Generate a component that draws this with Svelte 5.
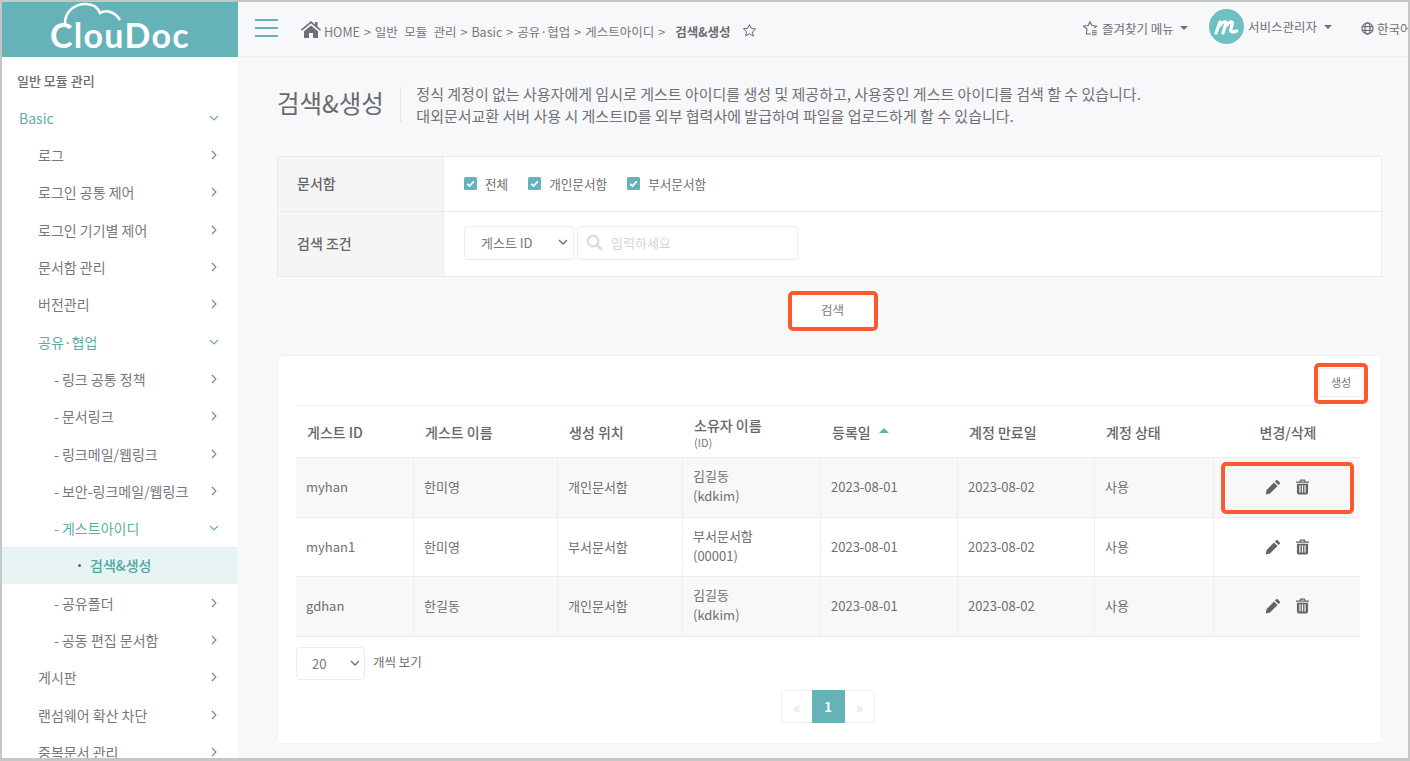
<script lang="ts">
const menu = [
  { label: 'Basic', level: 0, open: true },
  { label: '로그', level: 1 },
  { label: '로그인 공통 제어', level: 1 },
  { label: '로그인 기기별 제어', level: 1 },
  { label: '문서함 관리', level: 1 },
  { label: '버전관리', level: 1 },
  { label: '공유·협업', level: 1, open: true },
  { label: '- 링크 공통 정책', level: 2 },
  { label: '- 문서링크', level: 2 },
  { label: '- 링크메일/웹링크', level: 2 },
  { label: '- 보안-링크메일/웹링크', level: 2 },
  { label: '- 게스트아이디', level: 2, open: true },
  { label: '검색&생성', level: 3 },
  { label: '- 공유폴더', level: 2 },
  { label: '- 공동 편집 문서함', level: 2 },
  { label: '게시판', level: 1 },
  { label: '랜섬웨어 확산 차단', level: 1 },
  { label: '중복문서 관리', level: 1 }
];

const crumbs = ['일반 모듈 관리', 'Basic', '공유·협업', '게스트아이디'];
const boxes = ['전체', '개인문서함', '부서문서함'];

const rows = [
  { id: 'myhan', name: '한미영', place: '개인문서함', owner: '김길동', ownerId: '(kdkim)', reg: '2023-08-01', end: '2023-08-02', state: '사용' },
  { id: 'myhan1', name: '한미영', place: '부서문서함', owner: '부서문서함', ownerId: '(00001)', reg: '2023-08-01', end: '2023-08-02', state: '사용' },
  { id: 'gdhan', name: '한길동', place: '개인문서함', owner: '김길동', ownerId: '(kdkim)', reg: '2023-08-01', end: '2023-08-02', state: '사용' }
];
</script>

{#snippet chevron(open)}
  <svg class="chev" class:down={open} width="10" height="10" viewBox="0 0 10 10">
    {#if open}
      <path d="M1 3l4 4 4-4" />
    {:else}
      <path d="M3 1l4 4-4 4" />
    {/if}
  </svg>
{/snippet}

{#snippet selectArrow()}
  <svg class="sel-arrow" width="10" height="7" viewBox="0 0 10 7"><path d="M1 1l4 4 4-4" /></svg>
{/snippet}

<div class="frame">
  <aside class="side">
    <div class="logo">
      <svg class="cloud" width="70" height="24" viewBox="0 0 70 24">
        <path d="M3 21C3 9 14 1 25 2c7 .5 11 4 13 9 6-4 15-1 20 7" />
      </svg>
      <span>ClouDoc</span>
    </div>
    <nav class="menu">
      <div class="menu-title">일반 모듈 관리</div>
      {#each menu as m}
        <div class="item lv{m.level}" class:open={m.open} class:current={m.level === 3}>
          {#if m.level === 3}<i class="dot"></i>{/if}
          <span class="item-label">{m.label}</span>
          {#if m.level !== 3}{@render chevron(m.open)}{/if}
        </div>
      {/each}
    </nav>
  </aside>

  <div class="right">
    <header class="top">
      <div class="burger"><i></i><i></i><i></i></div>
      <svg class="home" width="20" height="17" viewBox="0 0 20 17">
        <path d="M10 0 0 8.500l1 1.200L10 2.200l9 7.500 1-1.200-3.500-3V1h-2.500v2.600L10 0z" />
        <path d="M3 10.200 10 4.400l7 5.800V17h-5v-5H8v5H3z" />
      </svg>
      <div class="crumbs">
        <span>HOME</span>
        {#each crumbs as c}
          <span class="gt">&gt;</span><span>{c}</span>
        {/each}
        <span class="gt">&gt;</span><b>검색&생성</b>
      </div>
      <svg class="star" width="15" height="15" viewBox="0 0 24 24">
        <path d="M12 2.500l2.900 6.300 6.900.8-5.100 4.700 1.400 6.800L12 17.200l-6.100 3.400 1.400-6.800-5.100-4.700 6.900-.8z" />
      </svg>
      <div class="top-right">
        <div class="fav">
          <svg class="star" width="16" height="16" viewBox="0 0 24 24">
            <path d="M13 21H6.500l1-7.200-5.100-4.700 6.900-.8L12 2.500l2.900 5.800 6.900.8-3 3" />
            <path d="M15 16h7M15 19h7M15 22h7" />
          </svg>
          <span>즐겨찾기 메뉴</span><i class="caret"></i>
        </div>
        <div class="user">
          <div class="avatar">
            <svg width="26" height="16" viewBox="0 0 26 16">
              <path d="M2 14 6 3M6.500 6C8 3 11.500 1.500 12 4l-3 10M13 6c1.500-3 5-4.500 5.500-2l-1.800 7c-.3 2 2 2.500 6 1" />
            </svg>
          </div>
          <span>서비스관리자</span><i class="caret"></i>
        </div>
        <div class="lang">
          <svg width="13" height="13" viewBox="0 0 14 14">
            <circle cx="7" cy="7" r="6" />
            <ellipse cx="7" cy="7" rx="2.800" ry="6" />
            <path d="M1 5h12M1 9h12" />
          </svg>
          <span>한국어</span>
        </div>
      </div>
    </header>

    <main class="content">
      <div class="page-head">
        <h1>검색&생성</h1>
        <p>
          정식 계정이 없는 사용자에게 임시로 게스트 아이디를 생성 및 제공하고, 사용중인 게스트 아이디를 검색 할 수 있습니다.<br />
          대외문서교환 서버 사용 시 게스트ID를 외부 협력사에 발급하여 파일을 업로드하게 할 수 있습니다.
        </p>
      </div>

      <section class="search">
        <div class="s-row first">
          <div class="s-th">문서함</div>
          <div class="s-td checks">
            {#each boxes as b}
              <label class="check">
                <svg width="13" height="13" viewBox="0 0 13 13">
                  <rect width="13" height="13" rx="1.500" />
                  <path d="M3.200 6.800l2.300 2.200 4.300-4.600" />
                </svg>
                {b}
              </label>
            {/each}
          </div>
        </div>
        <div class="s-row second">
          <div class="s-th">검색 조건</div>
          <div class="s-td fields">
            <div class="select guest">게스트 ID {@render selectArrow()}</div>
            <div class="input">
              <svg width="17" height="17" viewBox="0 0 17 17">
                <circle cx="7" cy="7" r="5.300" />
                <path class="handle" d="M11 11l4.500 4.500" />
              </svg>
              입력하세요
            </div>
          </div>
        </div>
      </section>

      <div class="search-action">
        <div class="mark mark-search"><button>검색</button></div>
      </div>

      <section class="card">
        <div class="card-top">
          <div class="mark mark-make"><button class="small">생성</button></div>
        </div>
        <div class="grid head">
          <div>게스트 ID</div>
          <div>게스트 이름</div>
          <div>생성 위치</div>
          <div class="owner-h">소유자 이름<small>(ID)</small></div>
          <div class="sorted">등록일 <i class="sort"></i></div>
          <div>계정 만료일</div>
          <div>계정 상태</div>
          <div class="center">변경/삭제</div>
        </div>
        {#each rows as r, i}
          <div class="grid row" class:odd={i % 2 === 0}>
            <div>{r.id}</div>
            <div>{r.name}</div>
            <div>{r.place}</div>
            <div class="owner">{r.owner}<br />{r.ownerId}</div>
            <div>{r.reg}</div>
            <div>{r.end}</div>
            <div>{r.state}</div>
            <div class="actions">
              <svg width="16" height="16" viewBox="0 0 16 16">
                <path d="M11.200 1.200a1 1 0 0 1 1.400 0l2.200 2.200a1 1 0 0 1 0 1.400L13.500 6.100 9.900 2.500zM9 3.400 12.600 7 5 14.600l-4.300 1 .9-4.500z" />
              </svg>
              <svg width="13" height="16" viewBox="0 0 14 16">
                <path fill-rule="evenodd" d="M4.500 0h5l1 2H14v1.500H0V2h3.500zM5.200 1.200 4.900 2h4.200l-.3-.8zM1 4.500h12V14a2 2 0 0 1-2 2H3a2 2 0 0 1-2-2zM3.600 6.200v7.600h1.300V6.200zm2.750 0v7.600h1.300V6.200zm2.750 0v7.600h1.300V6.200z" />
              </svg>
              {#if i === 0}<div class="mark-cell"></div>{/if}
            </div>
          </div>
        {/each}
        <div class="per-page">
          <div class="select size">20 {@render selectArrow()}</div>
          <span>개씩 보기</span>
        </div>
        <div class="pager">
          <span class="pg">«</span>
          <span class="pg active">1</span>
          <span class="pg">»</span>
        </div>
      </section>
    </main>
  </div>
</div>

<style>
  :global(body) {
    margin: 0;
    background: #fff;
  }

  .frame {
    box-sizing: border-box;
    width: 1410px;
    height: 761px;
    display: flex;
    overflow: hidden;
    border: solid #c6c6c6;
    border-width: 2px 2px 3px 2px;
    background: #f7f8fa;
    font-family: 'Noto Sans CJK KR', 'Noto Sans', sans-serif;
    font-size: 13px;
    color: #6e6e73;
  }

  /* sidebar */
  .side {
    width: 236px;
    flex: none;
    background: #fff;
  }

  .logo {
    position: relative;
    height: 55px;
    background: #66b2b9;
    overflow: hidden;
    display: flex;
    justify-content: center;
    align-items: flex-start;
    box-sizing: border-box;
    padding-top: 13px;
    color: #fff;
    font-family: Lato, sans-serif;
    font-size: 34px;
    font-weight: 700;
    letter-spacing: 1.300px;
    line-height: 40px;
  }

  .cloud {
    position: absolute;
    left: 60px;
    top: 0;
    fill: none;
    stroke: #fff;
    stroke-width: 2.500;
  }

  .menu {
    padding-top: 5px;
  }

  .menu-title {
    height: 37.250px;
    line-height: 37.250px;
    padding-left: 15px;
    font-weight: 500;
    color: #6b6b70;
  }

  .item {
    position: relative;
    height: 37.300px;
    display: flex;
    align-items: center;
    justify-content: space-between;
    padding-right: 19px;
    font-size: 14px;
    color: #77777c;
  }

  .item.lv0 {
    padding-left: 17px;
    color: #5dada7;
  }

  .item.lv1 {
    padding-left: 36px;
  }

  .item.lv2 {
    padding-left: 52px;
  }

  .item.open {
    color: #5dada7;
  }

  .item.current {
    justify-content: flex-start;
    padding-left: 76px;
    background: #e8f3f4;
    color: #4fa6a2;
    font-weight: 500;
  }

  .dot {
    width: 3px;
    height: 3px;
    border-radius: 50%;
    background: #666;
    margin-right: 9px;
  }

  .chev {
    fill: none;
    stroke: #808085;
    stroke-width: 1.100;
  }

  .chev.down {
    stroke: #5dada7;
  }

  /* top bar */
  .right {
    flex: 1;
    min-width: 0;
  }

  .top {
    height: 55px;
    display: flex;
    align-items: center;
    box-sizing: border-box;
    border-bottom: 1px solid #f0f1f3;
    padding-left: 17px;
    white-space: nowrap;
    position: relative;
  }

  .burger {
    width: 23px;
    display: flex;
    flex-direction: column;
    gap: 6px;
    margin-right: 23px;
    margin-bottom: 2px;
  }

  .burger i {
    height: 2px;
    background: #66b2b9;
  }

  .home {
    fill: #6e6e76;
    margin-right: 3px;
    margin-top: 1px;
  }

  .crumbs {
    display: flex;
    gap: 4px;
    margin-top: 4px;
    color: #77777c;
    font-size: 12.500px;
    word-spacing: 3.500px;
  }

  .crumbs b {
    font-weight: 700;
    color: #6b6b70;
    margin-left: 6px;
  }

  .star {
    fill: none;
    stroke: #66666c;
    stroke-width: 1.600;
    margin-left: 12px;
    margin-top: 2px;
  }

  .top-right {
    position: absolute;
    left: 844px;
    top: 7px;
    display: flex;
    align-items: center;
    width: 330px;
    font-size: 12.500px;
  }

  .top-right .star {
    margin: 0 4px 0 0;
  }

  .fav {
    display: flex;
    align-items: center;
    width: 127px;
    flex: none;
    margin-top: 3px;
  }

  .user {
    display: flex;
    align-items: center;
    width: 152px;
    flex: none;
    gap: 4px;
  }

  .avatar {
    width: 35px;
    height: 35px;
    border-radius: 50%;
    background: #6fc0c4;
    display: flex;
    align-items: center;
    justify-content: center;
  }

  .avatar svg {
    fill: none;
    stroke: #fff;
    stroke-width: 3.200;
    stroke-linecap: round;
    stroke-linejoin: round;
  }

  .caret {
    width: 0;
    height: 0;
    margin-left: 6px;
    border: 4px solid transparent;
    border-top-color: #6e6e73;
    border-bottom: 0;
  }

  .user .caret {
    margin-left: 3px;
  }

  .lang {
    display: flex;
    align-items: center;
    gap: 3px;
    flex: none;
    margin-top: 3px;
  }

  .lang svg {
    fill: none;
    stroke: #6e6e73;
    stroke-width: 1.300;
  }

  /* content */
  .content {
    padding: 24px 26px 0 39px;
  }

  .page-head {
    display: flex;
    align-items: center;
    height: 46px;
    margin-bottom: 29px;
  }

  h1 {
    box-sizing: border-box;
    height: 35px;
    margin: 0;
    padding-right: 16px;
    border-right: 1px solid #e2e3e5;
    font-size: 24.500px;
    font-weight: 400;
    line-height: 31px;
    color: #6a6a6f;
  }

  .page-head p {
    margin: 2px 0 0 15.500px;
    font-size: 15px;
    line-height: 22.500px;
    color: #707075;
  }

  .search {
    width: 1105px;
    background: #fff;
    border: 1px solid #eaebed;
    box-sizing: border-box;
  }

  .s-row {
    display: flex;
  }

  .s-row.first {
    height: 54px;
    border-bottom: 1px solid #eaebed;
  }

  .s-row.second {
    height: 64px;
  }

  .s-row.first > div {
    padding-bottom: 2px;
  }

  .s-row.second > div {
    padding-bottom: 3px;
  }

  .s-th {
    width: 166px;
    flex: none;
    box-sizing: border-box;
    padding-left: 19px;
    display: flex;
    align-items: center;
    background: #f5f5f5;
    border-right: 1px solid #eaebed;
    font-size: 14px;
    font-weight: 500;
    color: #66666b;
  }

  .s-td {
    display: flex;
    align-items: center;
    padding-left: 20px;
  }

  .checks {
    gap: 20px;
  }

  .check {
    display: flex;
    align-items: center;
    gap: 8px;
    font-size: 12.600px;
  }

  .check rect {
    fill: #66b2b9;
  }

  .check path {
    fill: none;
    stroke: #fff;
    stroke-width: 1.800;
  }

  .fields {
    gap: 3px;
  }

  .select {
    box-sizing: border-box;
    display: flex;
    align-items: center;
    justify-content: space-between;
    background: #fff;
    border: 1px solid #ebecee;
    border-radius: 4px;
  }

  .guest {
    width: 110px;
    height: 34px;
    padding: 0 5px 0 16px;
    color: #77777c;
  }

  .sel-arrow {
    fill: none;
    stroke: #6e6e73;
    stroke-width: 1.300;
  }

  .input {
    box-sizing: border-box;
    width: 221px;
    height: 34px;
    display: flex;
    align-items: center;
    gap: 8px;
    padding-left: 8px;
    border: 1px solid #ebecee;
    border-radius: 4px;
    color: #d5d5d8;
  }

  .input svg {
    fill: none;
    stroke: #dcdcde;
    stroke-width: 2.300;
  }

  .input .handle {
    stroke-width: 3.200;
  }

  .search-action {
    display: flex;
    justify-content: center;
    padding: 14px 0 24px;
    width: 1111px;
  }

  button {
    font: inherit;
    background: #fff;
    color: #77777c;
    border: 1px solid #ecedef;
    border-radius: 3px;
    padding: 0;
  }

  .mark {
    border: 4px solid #fb5a30;
    border-radius: 5px;
    display: flex;
    background: #fff;
  }

  .mark-search {
    box-sizing: border-box;
    width: 90px;
    height: 40px;
  }

  .mark-search button {
    flex: 1;
    font-size: 12.500px;
    border: 0;
    padding-bottom: 4px;
  }

  .card {
    box-sizing: border-box;
    width: 1105px;
    height: 389px;
    padding: 0 20px 0 18px;
    background: #fff;
    border: 1px solid #f1f2f4;
    border-radius: 5px;
  }

  .card-top {
    height: 49px;
    display: flex;
    justify-content: flex-end;
    align-items: center;
    margin-right: -7px;
    padding-top: 5px;
    box-sizing: border-box;
  }

  .mark-make {
    box-sizing: border-box;
    width: 54px;
    height: 41px;
    padding: 1px 1px 3px;
  }

  .small {
    flex: 1;
    font-size: 11px;
  }

  .grid {
    display: grid;
    grid-template-columns: 118px 144px 125px 138px 137px 137px 119px 146px;
    width: 1064px;
  }

  .head {
    height: 53px;
    align-items: center;
    border-top: 1px solid #f1f2f4;
    border-bottom: 1px solid #ebecee;
    box-sizing: border-box;
    font-size: 14px;
    font-weight: 500;
    color: #66666b;
  }

  .head > div {
    padding-left: 11px;
  }

  .head .center {
    padding-left: 2px;
    text-align: center;
  }

  .owner-h {
    line-height: 17px;
    margin-top: 2px;
  }

  .owner-h small {
    display: block;
    font-size: 11px;
    font-weight: 400;
    line-height: 11px;
    margin-top: 3px;
    color: #77777c;
  }

  .sort {
    display: inline-block;
    width: 0;
    height: 0;
    margin: 0 0 5px 5px;
    border: 5px solid transparent;
    border-bottom-color: #66b2b9;
    border-top: 0;
  }

  .row {
    height: 59.700px;
    border-bottom: 1px solid #ebecee;
    box-sizing: border-box;
    background: #fff;
  }

  .row.odd {
    background: #f8f8f8;
  }

  .row > div {
    display: flex;
    align-items: center;
    padding-left: 10px;
    padding-bottom: 2px;
    border-right: 1px solid #eeeff0;
  }

  .row > div:last-child {
    border-right: 0;
  }

  .row > .owner {
    line-height: 20px;
    display: block;
    padding-top: 8px;
    padding-bottom: 0;
  }

  .row > .actions {
    position: relative;
    justify-content: center;
    gap: 15px;
    padding-left: 0;
    padding-bottom: 0;
    margin-top: -1px;
  }

  .actions svg {
    fill: #636368;
  }

  .mark-cell {
    position: absolute;
    left: 7px;
    top: 5px;
    width: 133px;
    height: 52px;
    box-sizing: border-box;
    border: 4px solid #fb5a30;
    border-radius: 5px;
  }

  .per-page {
    display: flex;
    gap: 8px;
    margin-top: 10px;
    font-size: 12.500px;
  }

  .per-page span {
    margin-top: 5px;
  }

  .size {
    width: 69px;
    height: 33px;
    padding: 0 4px 0 15px;
    font-size: 13px;
    color: #77777c;
  }

  .pager {
    display: flex;
    width: 94px;
    height: 33px;
    margin: 10px 0 0 485px;
    border: 1px solid #ecedef;
    border-radius: 4px;
    box-sizing: border-box;
  }

  .pg {
    flex: 1;
    display: flex;
    align-items: center;
    justify-content: center;
    color: #dcdde0;
    font-size: 15px;
    line-height: 1;
  }

  .pg.active {
    flex: none;
    width: 33px;
    margin: -1px 0;
    background: #66b2b9;
    color: #fff;
    font-size: 13px;
    font-weight: 700;
  }
</style>
